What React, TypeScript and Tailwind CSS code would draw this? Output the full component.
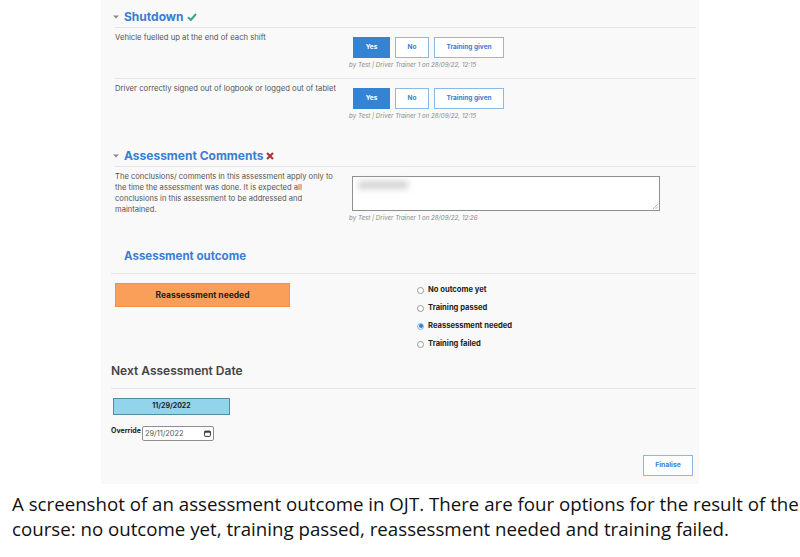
import { ReactNode } from "react";

const blue = "text-[#3a7dd1]";

function Caret() {
  return (
    <svg width="6" height="4" viewBox="0 0 6 4" className="-ml-[2px] mr-[5px]">
      <path d="M0 0.5 L6 0.5 L3 3.5 Z" fill="#8a8a8a" />
    </svg>
  );
}

function SectionHeader({ title, icon }: { title: string; icon: ReactNode }) {
  return (
    <div className="flex items-center pb-[2px] border-b border-[#e4e4e4] mr-[3px]">
      <Caret />
      <span className={`text-[12px] leading-[16px] font-bold ${blue}`}>{title}</span>
      <span className="ml-[3px] flex items-center">{icon}</span>
    </div>
  );
}

function Signed({ time }: { time: string }) {
  return (
    <div className="mt-[2px] text-[6.2px] leading-[9px] italic text-[#8a8a8a]">
      by Test | Driver Trainer 1 on 28/09/22, {time}
    </div>
  );
}

function QuestionRow({ label, border }: { label: string; border?: boolean }) {
  return (
    <div className={`flex pt-[9px] pb-[9px] mr-[3px] ${border ? "border-b border-[#e4e4e4]" : ""}`}>
      <div className="w-[234px] -mt-[4px] text-[7.7px] leading-[10px] text-[#555]">{label}</div>
      <div className="flex flex-col">
        <div className="flex gap-[5px] ml-[4px]">
          <button className="w-[37px] h-[21px] bg-[#3584d3] text-white text-[6.5px] font-bold">Yes</button>
          <button className={`w-[34px] h-[21px] bg-white border border-[#8ab8e8] text-[6.5px] font-bold ${blue}`}>No</button>
          <button className={`w-[70px] h-[21px] bg-white border border-[#8ab8e8] text-[6.5px] font-bold ${blue}`}>
            Training given
          </button>
        </div>
        <Signed time="12:15" />
      </div>
    </div>
  );
}

function Radio({ label, checked }: { label: string; checked?: boolean }) {
  return (
    <div className="flex items-center h-[18px]">
      <span
        className={`w-[7px] h-[7px] rounded-full border bg-white flex items-center justify-center ${
          checked ? "border-[#7fb0ea]" : "border-[#999]"
        }`}
      >
        {checked && <span className="w-[4px] h-[4px] rounded-full bg-[#2f7de1]" />}
      </span>
      <span className="ml-[4px] text-[7.6px] font-bold text-[#222]">{label}</span>
    </div>
  );
}

export default function App() {
  return (
    <div className="w-[800px] h-[557px] bg-white overflow-hidden" style={{ fontFamily: "Inter, 'Noto Sans', sans-serif" }}>
      <div className="ml-[101px] w-[598px] h-[484px] bg-[#f9f9f9] pl-[14px] pt-[9px] flex flex-col">
        <SectionHeader
          title="Shutdown"
          icon={
            <svg width="10" height="8" viewBox="0 0 10 8">
              <path d="M1 4.2 L3.8 7 L9 1" stroke="#3aa58a" strokeWidth="2" fill="none" />
            </svg>
          }
        />
        <QuestionRow label="Vehicle fuelled up at the end of each shift" border />
        <QuestionRow label="Driver correctly signed out of logbook or logged out of tablet" />

        <div className="mt-[19px]">
          <SectionHeader
            title="Assessment Comments"
            icon={
              <svg width="8" height="8" viewBox="0 0 8 8">
                <path d="M1 1 L7 7 M7 1 L1 7" stroke="#a83232" strokeWidth="2" />
              </svg>
            }
          />
        </div>
        <div className="flex pt-[4px]">
          <div className="w-[234px] text-[7.6px] leading-[11px] text-[#555] pr-[12px]">
            The conclusions/ comments in this assessment apply only to the time the assessment was done. It is expected all conclusions in this assessment to be addressed and maintained.
          </div>
          <div className="flex flex-col pt-[5px]">
            <div className="ml-[3px] w-[308px] h-[35px] bg-white border border-[#8f8f8f] relative">
              <div className="absolute left-[5px] top-[4px] w-[50px] h-[8px] bg-[#d2d2d2] blur-[3px]" />
              <svg width="5" height="5" viewBox="0 0 5 5" className="absolute right-[1px] bottom-[1px]">
                <path d="M0 5 L5 0 M2.5 5 L5 2.5" stroke="#999" strokeWidth="0.7" />
              </svg>
            </div>
            <Signed time="12:26" />
          </div>
        </div>

        <div className="-ml-[4px] mt-[20px] mr-[3px] border-b border-[#e4e4e4] pb-[7px] pl-[13px]">
          <span className={`text-[11.5px] leading-[16px] font-bold ${blue}`}>Assessment outcome</span>
        </div>
        <div className="flex pt-[9px]">
          <div className="w-[175px] h-[24px] bg-[#f99f5a] border border-[#f0904a] flex items-center justify-center text-[8.5px] font-bold text-[#222]">
            Reassessment needed
          </div>
          <div className="ml-[127px] -mt-[2px] flex flex-col">
            <Radio label="No outcome yet" />
            <Radio label="Training passed" />
            <Radio label="Reassessment needed" checked />
            <Radio label="Training failed" />
          </div>
        </div>

        <div className="-ml-[4px] mt-[4px] mr-[3px] border-b border-[#e4e4e4] pb-[7px]">
          <span className="text-[12px] leading-[16px] font-semibold text-[#444]">Next Assessment Date</span>
        </div>
        <div className="-ml-[2px] mt-[9px] w-[117px] h-[17px] bg-[#93d3ec] border border-[#4f8ea6] flex items-center justify-center text-[7px] font-bold text-[#222]">
          11/29/2022
        </div>
        <div className="-ml-[4px] mt-[11px] flex items-start">
          <span className="text-[7px] leading-[10px] font-bold text-[#222]">Override</span>
          <div className="ml-[1px] w-[72px] h-[15px] bg-white border border-[#8f8f8f] rounded-[2px] flex items-center justify-between px-[2px]">
            <span className="text-[7.4px] text-[#555]">29/11/2022</span>
            <svg width="7" height="7" viewBox="0 0 7 7">
              <rect x="0.6" y="1.1" width="5.8" height="5.3" rx="0.8" stroke="#333" strokeWidth="1" fill="none" />
              <rect x="0.6" y="1.1" width="5.8" height="1.6" fill="#333" />
            </svg>
          </div>
        </div>
        <div className="flex justify-end mr-[6px] mt-[14px]">
          <button className={`w-[50px] h-[21px] bg-white border border-[#8ab8e8] text-[6.8px] font-bold ${blue}`}>Finalise</button>
        </div>
      </div>
      <p className="pl-[12px] pt-[7px] text-[18.7px] leading-[25px] text-[#111]" style={{ fontFamily: "'Open Sans', 'Noto Sans', sans-serif" }}>
        A screenshot of an assessment outcome in OJT. There are four options for the result of the course: no outcome yet, training passed, reassessment needed and training failed.
      </p>
    </div>
  );
}
